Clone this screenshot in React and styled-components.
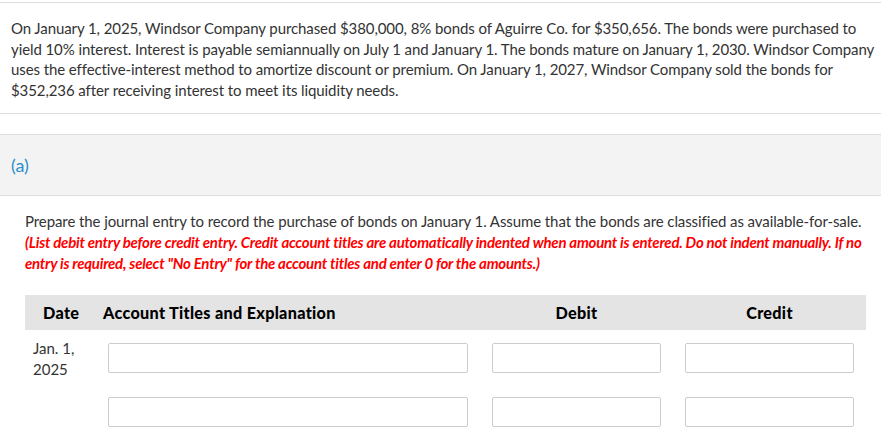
import React from 'react'
import styled, { createGlobalStyle } from 'styled-components'

const GlobalStyle = createGlobalStyle`
  body {
    margin: 0;
    background: #fff;
    font-family: Lato, "Open Sans", sans-serif;
    color: #333;
  }
`

const Page = styled.div`
  padding-top: 2px;
`

const Intro = styled.div`
  border-top: 1px solid #ddd;
  border-bottom: 1px solid #ddd;
  padding: 15px 0 13px 11px;
  font-size: 15px;
  line-height: 20.6px;
  letter-spacing: -0.09px;
  white-space: nowrap;
`

const PartBar = styled.div`
  margin-top: 20px;
  height: 60px;
  display: flex;
  align-items: center;
  padding-left: 11px;
  background: #f3f3f3;
  border-top: 1px solid #ddd;
  border-bottom: 1px solid #ddd;
  color: #2a8fcc;
  font-size: 18px;
`

const Question = styled.div`
  padding: 15px 0 0 25px;
  font-size: 15px;
  line-height: 21px;
  white-space: nowrap;
`

const Note = styled.p`
  margin: 0;
  color: #f00;
  font-style: italic;
  font-weight: 700;
  letter-spacing: -0.24px;
`

const Prompt = styled.p`
  margin: 0;
  letter-spacing: -0.09px;
`

const Table = styled.div`
  margin: 21px 15px 0 25px;
`

const Row = styled.div`
  display: grid;
  grid-template-columns: 78px 365px 193px 193px;
  padding-right: 12px;
  ${p => p.$head
    ? 'background: #e4e4e4; height: 35px; align-items: center;'
    : 'padding-top: 13px; padding-bottom: 11px; align-items: start;'}
`

const HeadCell = styled.div`
  font-weight: 900;
  font-size: 16.2px;
  letter-spacing: 0.3px;
  color: #000;
  padding-left: ${p => p.$pad || 0}px;
  text-align: ${p => (p.$center ? 'center' : 'left')};
`

const DateCell = styled.div`
  height: 30px;
  padding-left: 8px;
  margin-top: -5px;
  font-size: 15px;
  line-height: 21px;
  white-space: nowrap;
`

const InputCell = styled.div`
  padding-left: ${p => p.$pad}px;
`

const Field = styled.input`
  display: block;
  box-sizing: border-box;
  width: 100%;
  height: 30px;
  border: 1px solid #ccc;
  border-radius: 2px;
  background: #fff;
  margin: 0;
`

const rows = [{ date: ['Jan. 1,', '2025'] }, { date: null }]

export default function App() {
  return (
    <Page>
      <GlobalStyle />
      <Intro>
        On January 1, 2025, Windsor Company purchased $380,000, 8% bonds of Aguirre Co. for $350,656. The bonds were purchased to
        <br />
        yield 10% interest. Interest is payable semiannually on July 1 and January 1. The bonds mature on January 1, 2030. Windsor Company
        <br />
        uses the effective-interest method to amortize discount or premium. On January 1, 2027, Windsor Company sold the bonds for
        <br />
        $352,236 after receiving interest to meet its liquidity needs.
      </Intro>

      <PartBar>(a)</PartBar>

      <Question>
        <Prompt>
          Prepare the journal entry to record the purchase of bonds on January 1. Assume that the bonds are classified as available-for-sale.
        </Prompt>
        <Note>
          (List debit entry before credit entry. Credit account titles are automatically indented when amount is entered. Do not indent manually. If no
          <br />
          entry is required, select "No Entry" for the account titles and enter 0 for the amounts.)
        </Note>
      </Question>

      <Table>
        <Row $head>
          <HeadCell $pad={18}>Date</HeadCell>
          <HeadCell>Account Titles and Explanation</HeadCell>
          <HeadCell $pad={24} $center>Debit</HeadCell>
          <HeadCell $pad={24} $center>Credit</HeadCell>
        </Row>
        {rows.map((r, i) => (
          <Row key={i}>
            <DateCell>
              {r.date && (
                <>
                  {r.date[0]}
                  <br />
                  {r.date[1]}
                </>
              )}
            </DateCell>
            <InputCell $pad={5}><Field /></InputCell>
            <InputCell $pad={24}><Field /></InputCell>
            <InputCell $pad={24}><Field /></InputCell>
          </Row>
        ))}
      </Table>
    </Page>
  )
}
